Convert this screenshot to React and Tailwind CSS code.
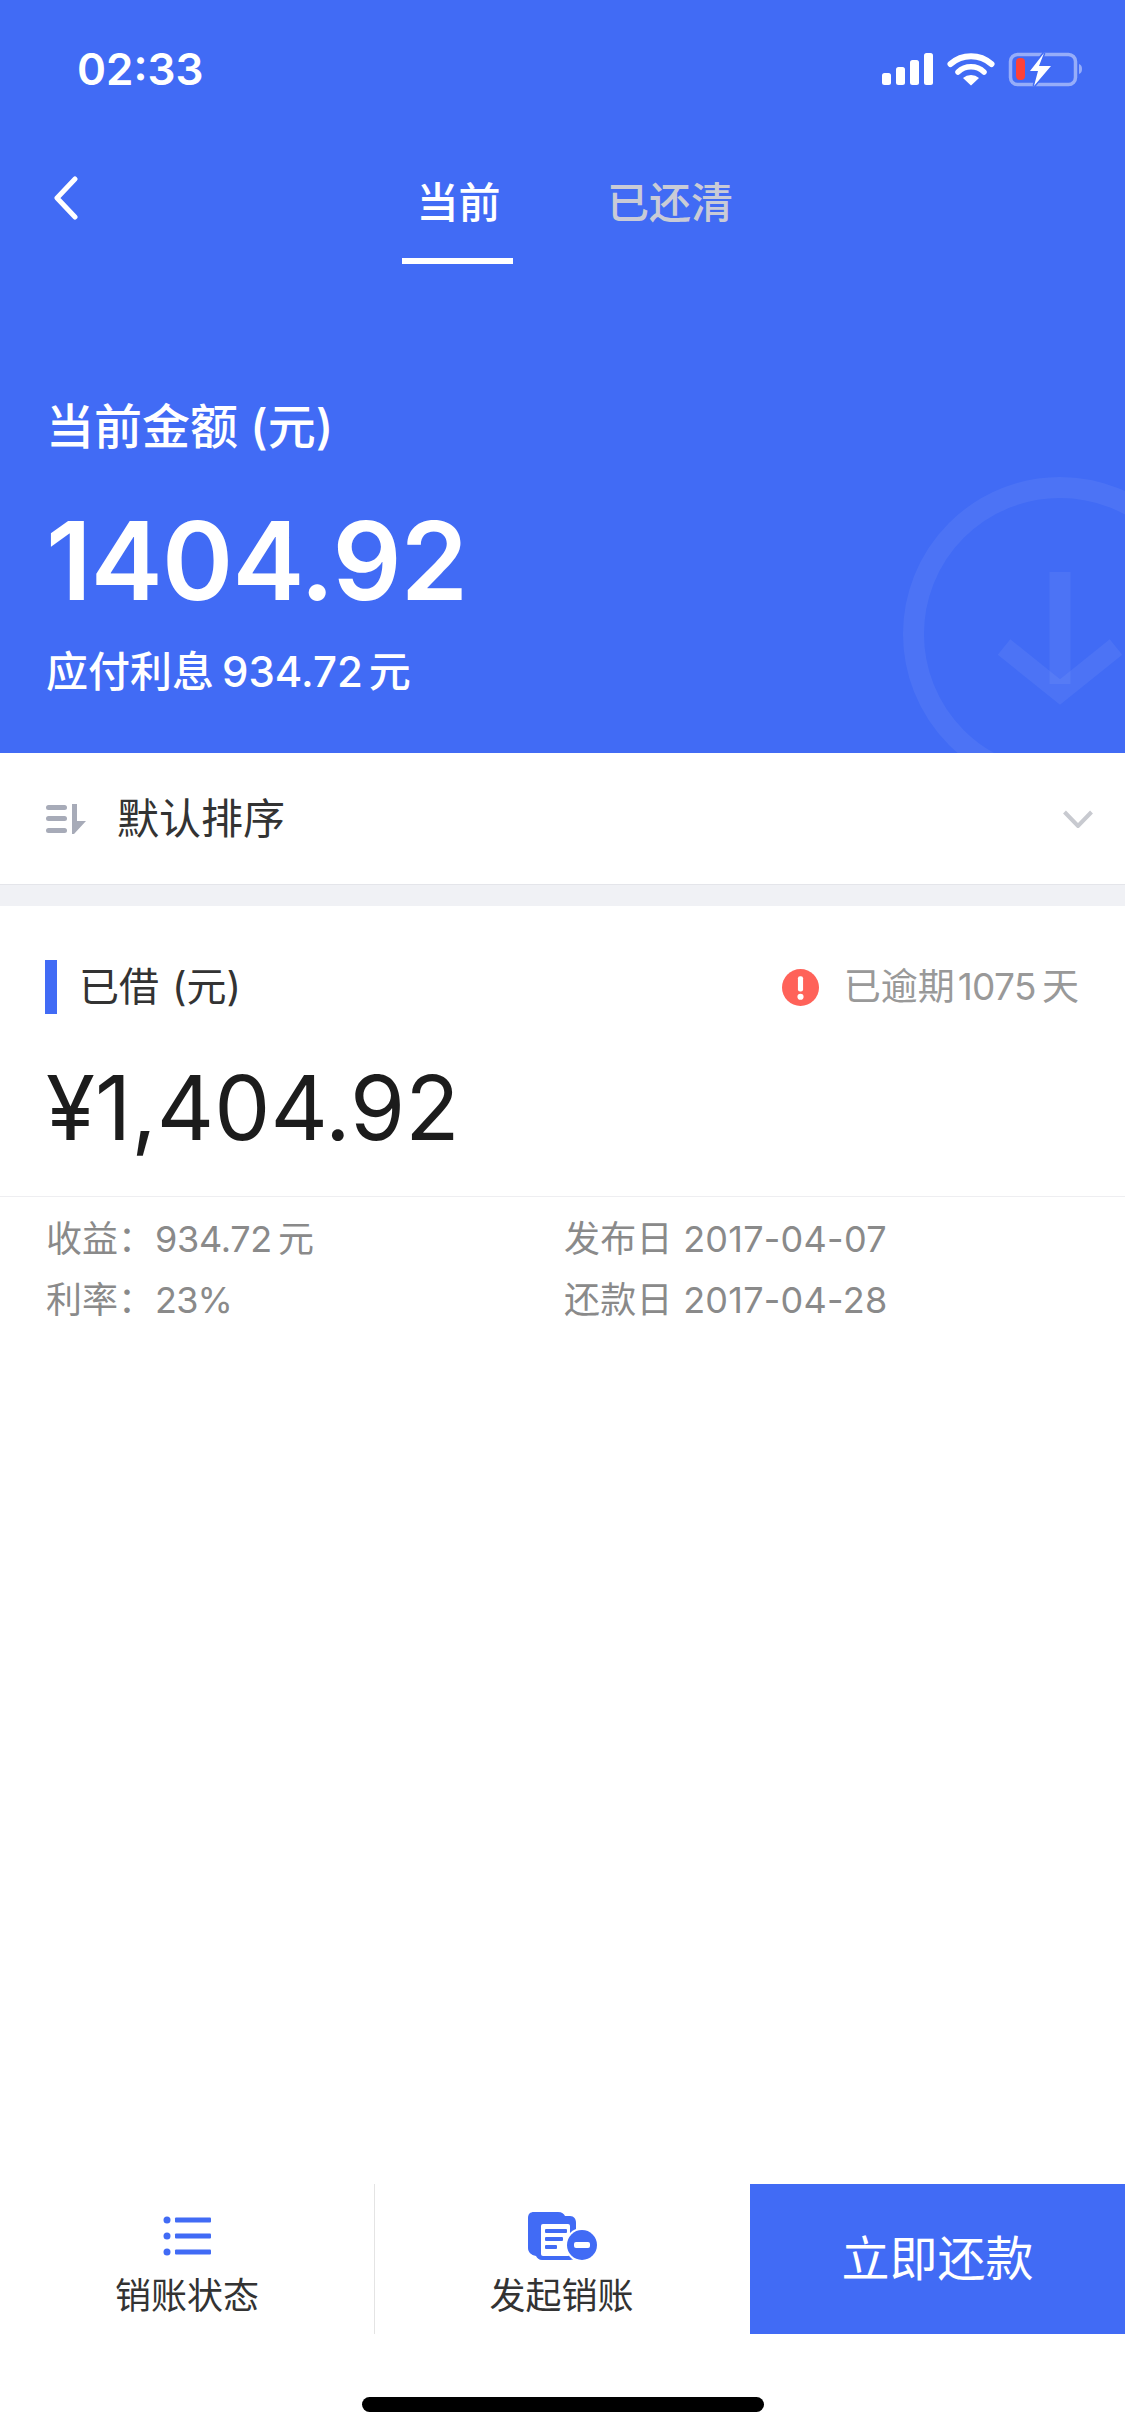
const font = { fontFamily: '"Inter", "Noto Sans CJK SC", sans-serif' };

const StatusIcons = () => (
  <svg width="202" height="38" viewBox="0 0 202 38">
    <rect x="2" y="23" width="9" height="12" rx="2.500" fill="#fff" />
    <rect x="16" y="17" width="9" height="18" rx="2.500" fill="#fff" />
    <rect x="30" y="10" width="9" height="25" rx="2.500" fill="#fff" />
    <rect x="44" y="3" width="9" height="32" rx="2.500" fill="#fff" />
    <path d="M70.500 14a31 31 0 0 1 41 0" fill="none" stroke="#fff" strokeWidth="6" strokeLinecap="round" />
    <path d="M78 22a19 19 0 0 1 26 0" fill="none" stroke="#fff" strokeWidth="5.500" strokeLinecap="round" />
    <path d="M83 28a12 12 0 0 1 16 0l-8 7.500z" fill="#fff" />
    <rect x="130.500" y="4.500" width="65" height="30" rx="7" fill="none" stroke="#fff" strokeOpacity="0.45" strokeWidth="3.500" />
    <path d="M199 14c2 .5 3 2.500 3 5s-1 4.500-3 5z" fill="#fff" fillOpacity="0.45" />
    <rect x="136" y="8" width="9" height="22" rx="4" fill="#ff4138" />
    <path d="M164 3l-5 13h12l-17 20 4-15h-8z" fill="#fff" stroke="#416bf5" strokeWidth="3" paintOrder="stroke" />
  </svg>
);

const Watermark = () => (
  <svg width="235" height="286" viewBox="0 0 235 286" fill="none" stroke="#fff" strokeOpacity="0.06" strokeWidth="21" className="absolute left-[890px] top-[467px]">
    <circle cx="170" cy="167" r="146.500" />
    <path d="M170 105v112" />
    <path d="M114 180l56 45 56-45" strokeWidth="20" />
  </svg>
);

const SortIcon = () => (
  <svg width="40" height="30" viewBox="0 0 40 30" fill="#a7abb8">
    <rect x="0" y="1" width="21" height="5" rx="2.500" />
    <rect x="0" y="12" width="21" height="5" rx="2.500" />
    <rect x="0" y="24" width="21" height="5" rx="2.500" />
    <path d="M26 0h5v17h9L28 30h-2z" />
  </svg>
);

const ListIcon = () => (
  <svg width="48" height="40" viewBox="0 0 48 40" fill="#416bf5">
    <circle cx="4" cy="4" r="3.500" />
    <circle cx="4" cy="20" r="3.500" />
    <circle cx="4" cy="36" r="3.500" />
    <rect x="12" y="1.500" width="36" height="5" rx="1" />
    <rect x="12" y="17.500" width="36" height="5" rx="1" />
    <rect x="12" y="33.500" width="36" height="5" rx="1" />
  </svg>
);

const ClearIcon = () => (
  <svg width="70" height="48" viewBox="0 0 70 48">
    <path d="M6 0h24c4 0 6 2 7 4h5c4 0 6 3 6 7v30c0 4-2 7-6 7H14c-3 0-5-2-6-4-5-1-8-4-8-8V6c0-4 2-6 6-6z" fill="#416bf5" />
    <rect x="13" y="12" width="29" height="32" rx="2" fill="#fff" />
    <rect x="17" y="17" width="22" height="4" rx="1" fill="#416bf5" />
    <rect x="17" y="25" width="18" height="4" rx="1" fill="#416bf5" />
    <rect x="17" y="33" width="12" height="4" rx="1" fill="#416bf5" />
    <circle cx="54" cy="33" r="17" fill="#fff" />
    <circle cx="54" cy="33" r="15" fill="#416bf5" />
    <rect x="46" y="30" width="16" height="6" rx="2" fill="#fff" />
  </svg>
);

const App = () => {
  return (
    <div style={font} className="w-[1125px] h-[2436px] flex flex-col bg-white overflow-hidden">
      <div className="relative h-[753px] shrink-0 bg-[#416bf5] overflow-hidden text-white">
        <Watermark />
        <div className="flex items-center justify-between h-[38px] mt-[50px] pl-[77px] pr-[43px]">
          <span className="text-[44px] leading-[38px] font-semibold">02:33</span>
          <StatusIcons />
        </div>
        <div className="relative flex h-[90px] mt-[86px] pl-[402px]">
          <svg width="28" height="44" viewBox="0 0 28 44" fill="none" stroke="#fff" strokeWidth="5" strokeLinecap="round" strokeLinejoin="round" className="absolute left-[52px] top-[2px]">
            <path d="M23 3L5 22l18 19" />
          </svg>
          <div className="w-[111px] flex flex-col items-center">
            <span className="ml-[2px] mt-[2px] text-[42px] leading-[54px] font-medium">当前</span>
            <div className="w-[111px] h-[6px] mt-[28px] bg-white" />
          </div>
          <span className="ml-[94px] mt-[2px] text-[42px] leading-[54px] font-medium text-[#c9cbd6]">已还清</span>
        </div>
        <div className="pl-[46px] pt-[133px]">
          <div className="text-[48px] leading-[60px] font-medium">
            当前金额<span className="ml-[12px]">(元)</span>
          </div>
          <div className="text-[108px] leading-[120px] font-semibold mt-[44px] tracking-[-0.8px]">1404.92</div>
          <div className="flex text-[42px] leading-[56px] font-medium mt-[23px]">
            <span>应付利息</span>
            <span className="ml-[8px]">934.72</span>
            <span className="ml-[6px]">元</span>
          </div>
        </div>
      </div>

      <div className="h-[132px] shrink-0 flex items-center pl-[46px] pr-[32px] border-b border-[#e4e5ea]">
        <SortIcon />
        <span className="ml-[31px] text-[42px] text-[#333]">默认排序</span>
        <svg width="30" height="18" viewBox="0 0 30 18" fill="none" stroke="#c8cad0" strokeWidth="4" className="ml-auto">
          <path d="M1.500 2L15 16 28.500 2" />
        </svg>
      </div>
      <div className="h-[21px] shrink-0 bg-[#f0f1f5]" />

      <div className="shrink-0">
        <div className="flex items-center mt-[54px] h-[54px] pr-[46px]">
          <div className="w-[12px] h-[54px] ml-[45px] bg-[#416bf5]" />
          <span className="ml-[22px] text-[40px] text-[#333]">已借<span className="ml-[13px]">(元)</span></span>
          <svg width="37" height="37" viewBox="0 0 36 36" className="ml-auto">
            <circle cx="18" cy="18" r="18" fill="#ff6259" />
            <rect x="15.500" y="7" width="5" height="15" rx="2" fill="#fff" />
            <circle cx="18" cy="27" r="3" fill="#fff" />
          </svg>
          <span className="flex ml-[25px] text-[37px] text-[#999]">
            <span>已逾期</span>
            <span className="ml-[3px] tracking-[-0.6px]">1075</span>
            <span className="ml-[6px]">天</span>
          </span>
        </div>
        <div className="pl-[46px] mt-[44px] text-[89px] leading-[100px] text-[#1c1c1c]">¥1,404.92</div>
        <div className="h-px mt-[38px] bg-[#eeeef1]" />
        <div className="grid grid-cols-[518px_1fr] pl-[46px] pt-[12px] text-[36px] leading-[61px] text-[#8a8a8a]">
          <span className="flex">
            <span>收益：</span>
            <span className="ml-[1px] tracking-[-0.3px]">934.72</span>
            <span className="ml-[6px]">元</span>
          </span>
          <span className="tracking-[0.25px]">发布日 2017-04-07</span>
          <span className="flex">
            <span>利率：</span>
            <span className="ml-[1px] tracking-[-0.8px]">23%</span>
          </span>
          <span className="tracking-[0.25px]">还款日 2017-04-28</span>
        </div>
      </div>

      <div className="flex-1" />

      <div className="h-[150px] shrink-0 flex">
        <div className="w-[375px] flex flex-col items-center border-r border-[#e4e4e4] pt-[32px]">
          <ListIcon />
          <span className="mt-[15px] text-[36px] leading-[50px] text-[#333]">销账状态</span>
        </div>
        <div className="w-[375px] flex flex-col items-center pt-[28px]">
          <div className="ml-[1px]"><ClearIcon /></div>
          <span className="mt-[11px] mr-[2px] text-[36px] leading-[50px] text-[#333]">发起销账</span>
        </div>
        <div className="flex-1 flex items-center justify-center bg-[#416bf5] text-white text-[48px]">立即还款</div>
      </div>
      <div className="h-[102px] shrink-0 flex justify-center pt-[63px]">
        <div className="w-[402px] h-[15px] rounded-full bg-black" />
      </div>
    </div>
  );
};

export default App;
